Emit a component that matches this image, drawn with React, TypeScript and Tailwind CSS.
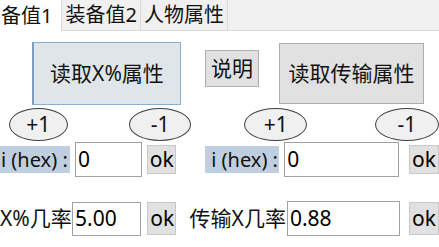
import React from "react";

const font = { fontFamily: '"Noto Sans", "Noto Sans CJK SC", sans-serif' };

function Ellipse({ label, className }: { label: string; className: string }) {
  return (
    <div
      className={`h-[33px] rounded-[50%] border border-[#404040] bg-[#f0f0f0] flex items-center justify-center text-[21px] leading-none text-[#111] ${className}`}
    >
      {label}
    </div>
  );
}

function Input({ value, className }: { value: string; className: string }) {
  return (
    <div
      className={`border border-[#a0a0a0] bg-white flex items-center pl-[2px] text-[21px] leading-none text-black ${className}`}
    >
      {value}
    </div>
  );
}

function Ok({ className }: { className: string }) {
  return (
    <div
      className={`border border-[#c8c8c8] bg-[#e1e1e1] flex items-center pl-[2px] text-[21px] leading-none text-black ${className}`}
    >
      ok
    </div>
  );
}

export default function App() {
  return (
    <div
      className="w-[439px] h-[247px] bg-white overflow-hidden relative text-[#111]"
      style={font}
    >
      {/* tab strip */}
      <div className="h-[31px] flex bg-[#f0f0f0] border-b border-[#d9d9d9] -ml-[21px]">
        <div className="h-[31px] -mb-px bg-white pl-[2px] pr-[9px] flex items-center text-[20px] leading-none">
          装备值1
        </div>
        <div className="h-[30px] border-l border-r border-[#d9d9d9] px-[3px] flex items-center text-[20px] leading-none">
          装备值2
        </div>
        <div className="h-[30px] border-r border-[#d9d9d9] px-[3px] flex items-center text-[20px] leading-none">
          人物属性
        </div>
      </div>

      {/* buttons row */}
      <div className="flex items-start mt-[11px] h-[63px]">
        <div className="ml-[32px] w-[149px] h-[63px] bg-[#e0e5ea] border border-[#8eb0cf] border-l-2 border-l-[#7f9fbf] flex items-center justify-center text-[21px] leading-none">
          读取X%属性
        </div>
        <div className="ml-[24px] mt-[8px] w-[54px] h-[37px] bg-[#e1e1e1] border border-[#adadad] flex items-center justify-center text-[21px] leading-none">
          说明
        </div>
        <div className="ml-[20px] mt-[1px] w-[145px] h-[61px] bg-[#e1e1e1] border border-[#adadad] flex items-center justify-center text-[21px] leading-none">
          读取传输属性
        </div>
      </div>

      {/* ellipse row */}
      <div className="flex items-start mt-[3px] h-[33px]">
        <Ellipse label="+1" className="ml-[9px] w-[60px]" />
        <Ellipse label="-1" className="ml-[61px] w-[64px]" />
        <Ellipse label="+1" className="ml-[53px] w-[64px]" />
        <Ellipse label="-1" className="ml-[68px] w-[64px] shrink-0" />
      </div>

      {/* hex row */}
      <div className="flex items-center mt-[1px] h-[35px]">
        <div className="w-[70px] h-[27px] bg-[#bfcfe0] flex items-center pl-[1px] text-[20px] leading-none whitespace-nowrap shrink-0">
          i (hex) :
        </div>
        <Input value="0" className="ml-[5px] w-[68px] h-[35px]" />
        <Ok className="ml-[5px] w-[30px] h-[29px]" />
        <div className="ml-[29px] w-[74px] h-[27px] bg-[#bfcfe0] flex items-center pl-[6px] text-[20px] leading-none whitespace-nowrap shrink-0">
          i (hex) :
        </div>
        <Input value="0" className="ml-[5px] w-[117px] h-[35px]" />
        <Ok className="ml-[10px] w-[30px] h-[29px] shrink-0" />
      </div>

      {/* rate row */}
      <div className="flex items-center mt-[24px] h-[35px]">
        <div className="w-[72px] text-[21px] leading-none whitespace-nowrap shrink-0">X%几率</div>
        <Input value="5.00" className="w-[71px] h-[34px]" />
        <Ok className="ml-[6px] w-[29px] h-[33px]" />
        <div className="ml-[14px] text-[21px] leading-none whitespace-nowrap">传输X几率</div>
        <Input value="0.88" className="ml-[1px] w-[116px] h-[35px]" />
        <Ok className="ml-[9px] w-[30px] h-[33px] shrink-0" />
      </div>
    </div>
  );
}
